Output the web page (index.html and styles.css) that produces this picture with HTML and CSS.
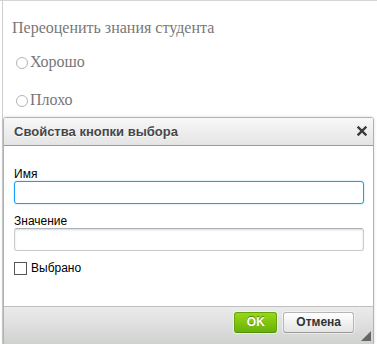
FILE: index.html
```html
<!DOCTYPE html>
<html lang="ru">
  <head>
    <meta charset="UTF-8" />
    <title>Свойства кнопки выбора</title>
    <link rel="stylesheet" href="styles.css">
  </head>
  <body>
    <div class="page">
      <div class="doc">
        <p class="question">Переоценить знания студента</p>
        <p class="option"><span class="radio"></span>Хорошо</p>
        <p class="option"><span class="radio"></span>Плохо</p>
      </div>
    </div>

    <div class="dialog">
      <div class="dialog-title">
        Свойства кнопки выбора
        <a class="dialog-close" href="#">
          <svg width="10" height="10" viewBox="0 0 10 10">
            <path d="M1.5 1.5 L8.5 8.5 M8.5 1.5 L1.5 8.5" stroke="#3a3a3a" stroke-width="2.4" stroke-linecap="square" />
          </svg>
        </a>
      </div>
      <div class="dialog-body">
        <label class="field">
          <span>Имя</span>
          <input type="text" class="text-input focused" />
        </label>
        <label class="field">
          <span>Значение</span>
          <input type="text" class="text-input" />
        </label>
        <label class="check">
          <span class="checkbox"></span>Выбрано
        </label>
      </div>
      <div class="dialog-footer">
        <a class="btn btn-ok" href="#">OK</a>
        <a class="btn" href="#">Отмена</a>
        <span class="grip"></span>
      </div>
    </div>
  </body>
</html>
```

FILE: styles.css
```css
body {
  margin: 0;
  background: #fff;
  font-family: "Liberation Sans", Arial, sans-serif;
  height: 344px;
  overflow: hidden;
  border-top: 1px solid #d4d4d4;
}

.page {
  margin-left: 2px;
  border-left: 1px solid #cfcfcf;
  height: 100%;
}

.doc {
  padding: 17px 9px 13px;
  font-family: "Liberation Serif", "Times New Roman", serif;
  font-size: 16px;
  color: #777;
}

.question {
  margin: 0 0 14px;
  line-height: 20px;
}

.option {
  margin: 0 0 18px;
  line-height: 20px;
  display: flex;
  align-items: center;
  padding-left: 4px;
}

.radio {
  width: 10px;
  height: 10px;
  border: 1px solid #b4b4b4;
  border-radius: 50%;
  margin-right: 2px;
  margin-top: 1px;
}

.dialog {
  position: absolute;
  left: 3px;
  top: 117px;
  width: 369px;
  border: 1px solid #b2b2b2;
  border-radius: 3px;
  background: #fff;
  box-shadow: 0 0 3px rgba(0, 0, 0, 0.15);
}

.dialog-title {
  position: relative;
  padding: 6px 10px;
  height: 15px;
  line-height: 16px;
  font-size: 13px;
  font-weight: bold;
  color: #474747;
  text-shadow: 0 1px 0 rgba(255, 255, 255, 0.75);
  border-bottom: 1px solid #999;
  border-radius: 2px 2px 0 0;
  background: linear-gradient(#f8f8f8, #e4e4e4);
}

.dialog-close {
  position: absolute;
  right: 6px;
  top: 8px;
  display: block;
  line-height: 0;
}

.dialog-body {
  padding: 21px 10px 31px;
  font-size: 12px;
  color: #000;
}

.field {
  display: block;
  margin-bottom: 10px;
}

.field span {
  display: block;
  line-height: 14px;
}

.text-input {
  display: block;
  box-sizing: border-box;
  width: 350px;
  height: 23px;
  margin: 0;
  border: 1px solid #c9cccf;
  border-top-color: #aeb3b9;
  border-radius: 3px;
  box-shadow: inset 0 1px 2px rgba(0, 0, 0, 0.15);
  outline: none;
}

.text-input.focused {
  border-color: #139ff7;
  box-shadow: 0 0 2px rgba(19, 159, 247, 0.4);
}

.check {
  display: flex;
  align-items: center;
  line-height: 14px;
}

.checkbox {
  width: 11px;
  height: 11px;
  border: 1px solid #555;
  margin-right: 4px;
  background: #fff;
}

.dialog-footer {
  display: flex;
  justify-content: flex-end;
  align-items: center;
  gap: 6px;
  padding: 5px 19px 12px 10px;
  border-top: 1px solid #bfbfbf;
  background: linear-gradient(#ebebeb, #cfd1cf);
  position: relative;
}

.btn {
  display: block;
  box-sizing: border-box;
  height: 21px;
  line-height: 19px;
  padding: 0 12px;
  font-size: 12px;
  font-weight: bold;
  color: #333;
  text-decoration: none;
  border: 1px solid #b6b6b6;
  border-bottom-color: #999;
  border-radius: 3px;
  background: linear-gradient(#fff, #e4e4e4);
  box-shadow: 0 0 0 1px rgba(255, 255, 255, 0.5);
}

.btn-ok {
  width: 43px;
  padding: 0;
  text-align: center;
  color: #fff;
  text-shadow: 0 -1px 0 #55830c;
  border-color: #62a60a #62a60a #4d9200;
  background: linear-gradient(#9ad717, #69b10b);
}

.grip {
  position: absolute;
  right: 2px;
  bottom: 4px;
  width: 0;
  height: 0;
  border-left: 10px solid transparent;
  border-bottom: 10px solid #666;
}
```
